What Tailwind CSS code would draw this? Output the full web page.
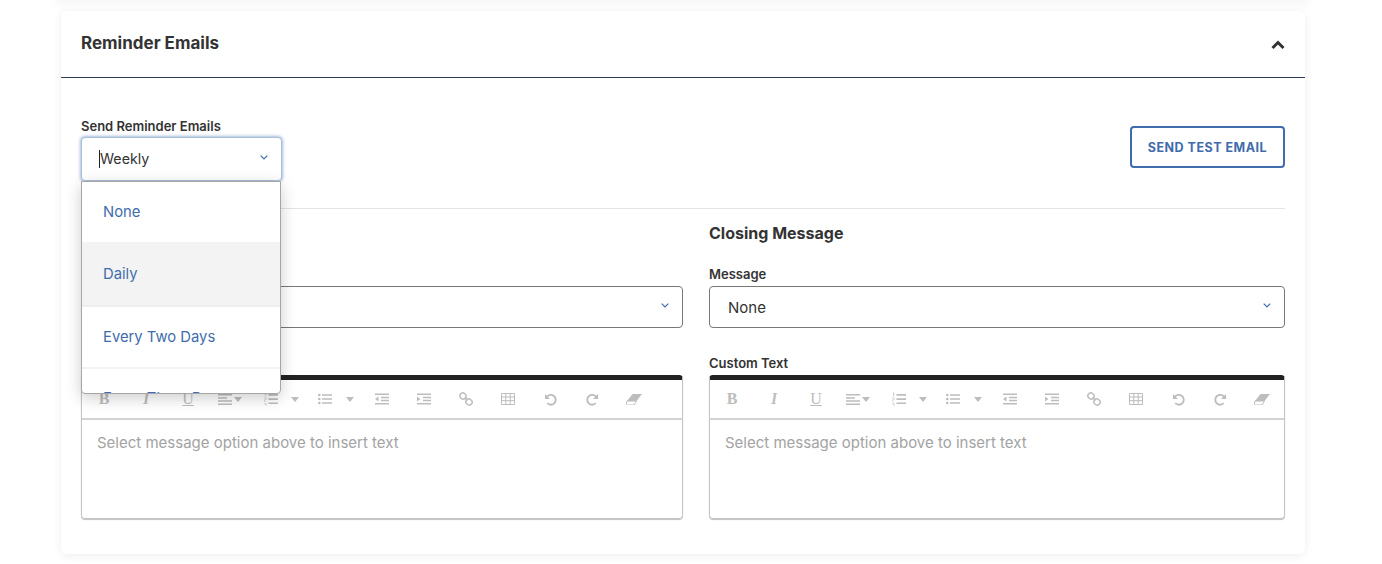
<!DOCTYPE html>
<html lang="en">
<head>
    <meta charset="UTF-8">
    <meta name="viewport" content="width=device-width, initial-scale=1.0">
    <title>Reminder Emails</title>
    <script src="https://cdn.jsdelivr.net/npm/@tailwindcss/browser@4"></script>
</head>
<body class="bg-white h-[564px] overflow-hidden font-['Inter',sans-serif] text-[#333]">

    <!-- Toolbar icons -->
    <svg class="hidden" xmlns="http://www.w3.org/2000/svg">
        <symbol id="i-caret" viewBox="0 0 8 5"><path d="M0 0h8L4 5z" fill="currentColor"/></symbol>
        <symbol id="i-align" viewBox="0 0 14 12"><path d="M0 1h14v1.500H0zM0 4.200h9v1.500H0zM0 7.300h14v1.500H0zM0 10.400h14v1.500H0z" fill="currentColor"/></symbol>
        <symbol id="i-ol" viewBox="0 0 14 14"><path d="M4.500 2h9.500v1.700H4.500zM4.500 6.200h9.500v1.700H4.500zM4.500 10.400h9.500v1.700H4.500z" fill="currentColor"/><path d="M1 .5h1.200v3.500H1zM0 5.500h2.500v2.500H.8v1H2.500v.6H0V7.400h1.700v-1.200H0zM0 11h2.500v3.500H0v-.6h1.700v-.8H.6v-.5h1.100v-1H0z" fill="currentColor" opacity=".75"/></symbol>
        <symbol id="i-ul" viewBox="0 0 14 12"><circle cx="1.300" cy="2" r="1.300" fill="currentColor"/><circle cx="1.300" cy="6" r="1.300" fill="currentColor"/><circle cx="1.300" cy="10" r="1.300" fill="currentColor"/><path d="M4 1.200h10v1.600H4zM4 5.200h10v1.600H4zM4 9.200h10v1.600H4z" fill="currentColor"/></symbol>
        <symbol id="i-outdent" viewBox="0 0 14 12"><path d="M0 .5h14v1.500H0zM6 3.700h8v1.500H6zM6 6.800h8v1.500H6zM0 10h14v1.500H0zM3.500 3.500v5L0 6z" fill="currentColor"/></symbol>
        <symbol id="i-indent" viewBox="0 0 14 12"><path d="M0 .5h14v1.500H0zM6 3.700h8v1.500H6zM6 6.800h8v1.500H6zM0 10h14v1.500H0zM0 3.500v5L3.500 6z" fill="currentColor"/></symbol>
        <symbol id="i-link" viewBox="0 0 14 14"><g fill="none" stroke="currentColor" stroke-width="1.500"><ellipse cx="4" cy="4" rx="3.200" ry="2.900" transform="rotate(40 4 4)"/><ellipse cx="10" cy="10" rx="3.200" ry="2.900" transform="rotate(40 10 10)"/><path d="M5.500 5.500l3 3"/></g></symbol>
        <symbol id="i-table" viewBox="0 0 14 12"><path d="M.5.500h13v11H.5zM.5 4h13M.5 7.700h13M4.800.5v11M9.200.5v11" fill="none" stroke="currentColor"/></symbol>
        <symbol id="i-undo" viewBox="0 0 14 14"><path d="M3 4.300A5.300 5.300 0 1 1 3.500 11" fill="none" stroke="currentColor" stroke-width="2"/><path d="M1 1v5.500h5.500z" fill="currentColor"/></symbol>
        <symbol id="i-redo" viewBox="0 0 14 14"><path d="M11 4.300A5.300 5.300 0 1 0 10.500 11" fill="none" stroke="currentColor" stroke-width="2"/><path d="M13 1v5.500H7.500z" fill="currentColor"/></symbol>
        <symbol id="i-eraser" viewBox="0 0 16 11"><path d="M6.500 0H16l-5.500 7H1z" fill="currentColor"/><path d="M1 7h9.500L8 11H0v-.5z" fill="none" stroke="currentColor"/></symbol>
    </svg>

    <!-- bottom edge of the card above -->
    <div class="h-0 mr-[77px] ml-[61px] shadow-[0_0_10px_4px_rgba(0,0,0,0.05)]"></div>

    <div class="pl-[61px] pr-[77px] pt-[11px]">
        <div class="bg-white rounded-md shadow-[0_2px_10px_rgba(0,0,0,0.07)] h-[543px]">

            <div class="h-[67px] border-b border-[#2f3d5c] pl-5 pr-5 flex items-center justify-between">
                <h2 class="text-[17px] font-bold -mt-[1px]">Reminder Emails</h2>
                <svg class="w-[14px] h-[10px] text-[#333] mt-[1px]" viewBox="0 0 14 10"><path d="M1.500 8L7 2.500 12.500 8" fill="none" stroke="currentColor" stroke-width="3"/></svg>
            </div>

            <div class="px-5 pt-[40px]">
                <div class="flex justify-between items-start h-[91px] border-b border-[#e3e3e3]">
                    <div class="relative w-[201px]">
                        <label class="block text-[13px] font-semibold leading-[18px] -mt-[1px] mb-[2px]">Send Reminder Emails</label>
                        <div class="h-[44px] rounded border border-[#a9bfdf] shadow-[0_0_3px_1px_rgba(63,108,172,0.45)] bg-white flex items-center justify-between pl-[17px] pr-[13px]">
                            <span class="text-[14.250px] border-l border-[#222] leading-[18px]">Weekly</span>
                            <svg class="w-[8px] h-[5px] -mt-[3px] text-[#3f6cac]" viewBox="0 0 8 5"><path d="M.7.7L4 4 7.300.7" fill="none" stroke="currentColor" stroke-width="1.200"/></svg>
                        </div>

                        <!-- open dropdown -->
                        <div class="absolute z-10 left-0 top-[63px] w-[200px] h-[213px] overflow-hidden bg-white border border-[#a6a6a6] rounded-b shadow-[0_4px_16px_rgba(0,0,0,0.2)] text-[14.800px] text-[#3f6cac]">
                            <div class="h-[60px] pl-[21px] flex items-center">None</div>
                            <div class="h-[65px] pl-[21px] pt-[2px] flex items-center bg-[#f3f3f3] border-b-2 border-[#eeeeee]">Daily</div>
                            <div class="h-[62px] pl-[21px] flex items-center border-b-2 border-[#f3f3f3]">Every Two Days</div>
                            <div class="h-[59px] pl-[21px] flex items-center">Every Three Days</div>
                        </div>
                    </div>
                    <button class="w-[155px] h-[42px] mt-[8px] pt-[2px] border-2 border-[#3f6cac] rounded text-[12.500px] font-bold tracking-[0.5px] text-[#3f6cac]">SEND TEST EMAIL</button>
                </div>

                <div class="flex gap-[26px]">
                    <div class="w-[602px]">
                        <h3 class="text-[16px] font-bold leading-5 mt-[14px]">Opening Message</h3>
                        <label class="block text-[13px] font-semibold leading-[18px] mt-[22px] mb-[3px]">Message</label>
                        <div class="h-[42px] rounded-sm border border-[#777] flex items-center justify-between pl-[18px] pr-[13px]">
                            <span class="text-[15px] mt-[2px]">None</span>
                            <svg class="w-[8px] h-[5px] -mt-[3px] text-[#3f6cac]" viewBox="0 0 8 5"><path d="M.7.7L4 4 7.300.7" fill="none" stroke="currentColor" stroke-width="1.200"/></svg>
                        </div>
                        <label class="block text-[13px] font-semibold leading-[18px] mt-[26px] mb-[3px]">Custom Text</label>
                        <div class="h-[144px] rounded-sm border-x border-b border-[#c4c4c4] border-t-[5px] border-t-[#222] shadow-[0_1px_1px_rgba(0,0,0,0.25)]">
                            <div class="h-[40px] border-b-2 border-[#d2d2d2] pl-[1px] flex items-center text-[#bdbdbd]">
                                <span class="w-[42px] text-center font-['Liberation_Serif',serif] font-bold text-[16px]">B</span>
                                <span class="w-[42px] text-center font-['Liberation_Serif',serif] italic font-bold text-[16px]">I</span>
                                <span class="w-[42px] text-center font-['Liberation_Serif',serif] underline text-[16px]">U</span>
                                <span class="w-[42px] flex items-center justify-center gap-[2px]"><svg class="w-[14px] h-[12px]"><use href="#i-align"/></svg><svg class="w-[8px] h-[5px]"><use href="#i-caret"/></svg></span>
                                <span class="w-[60px] flex items-center justify-center gap-[13px]"><svg class="w-[14px] h-[14px]"><use href="#i-ol"/></svg><svg class="w-[8px] h-[5px]"><use href="#i-caret"/></svg></span>
                                <span class="w-[50px] flex items-center justify-center gap-[14px]"><svg class="w-[14px] h-[12px]"><use href="#i-ul"/></svg><svg class="w-[8px] h-[5px]"><use href="#i-caret"/></svg></span>
                                <span class="w-[42px] flex justify-center"><svg class="w-[14px] h-[12px]"><use href="#i-outdent"/></svg></span>
                                <span class="w-[42px] flex justify-center"><svg class="w-[14px] h-[12px]"><use href="#i-indent"/></svg></span>
                                <span class="w-[42px] flex justify-center"><svg class="w-[14px] h-[14px]"><use href="#i-link"/></svg></span>
                                <span class="w-[42px] flex justify-center"><svg class="w-[14px] h-[12px]"><use href="#i-table"/></svg></span>
                                <span class="w-[42px] flex justify-center"><svg class="w-[13px] h-[13px]"><use href="#i-undo"/></svg></span>
                                <span class="w-[42px] flex justify-center"><svg class="w-[13px] h-[13px]"><use href="#i-redo"/></svg></span>
                                <span class="w-[42px] flex justify-center"><svg class="w-[16px] h-[11px]"><use href="#i-eraser"/></svg></span>
                            </div>
                            <p class="pl-[15px] pt-[13px] text-[15px] leading-[20px] text-[#a3a3a3]">Select message option above to insert text</p>
                        </div>
                    </div>

                    <div class="w-[576px]">
                        <h3 class="text-[16px] font-bold leading-5 mt-[14px]">Closing Message</h3>
                        <label class="block text-[13px] font-semibold leading-[18px] mt-[22px] mb-[3px]">Message</label>
                        <div class="h-[42px] rounded-sm border border-[#777] flex items-center justify-between pl-[18px] pr-[13px]">
                            <span class="text-[15px] mt-[2px]">None</span>
                            <svg class="w-[8px] h-[5px] -mt-[3px] text-[#3f6cac]" viewBox="0 0 8 5"><path d="M.7.7L4 4 7.300.7" fill="none" stroke="currentColor" stroke-width="1.200"/></svg>
                        </div>
                        <label class="block text-[13px] font-semibold leading-[18px] mt-[26px] mb-[3px]">Custom Text</label>
                        <div class="h-[144px] rounded-sm border-x border-b border-[#c4c4c4] border-t-[5px] border-t-[#222] shadow-[0_1px_1px_rgba(0,0,0,0.25)]">
                            <div class="h-[40px] border-b-2 border-[#d2d2d2] pl-[1px] flex items-center text-[#bdbdbd]">
                                <span class="w-[42px] text-center font-['Liberation_Serif',serif] font-bold text-[16px]">B</span>
                                <span class="w-[42px] text-center font-['Liberation_Serif',serif] italic font-bold text-[16px]">I</span>
                                <span class="w-[42px] text-center font-['Liberation_Serif',serif] underline text-[16px]">U</span>
                                <span class="w-[42px] flex items-center justify-center gap-[2px]"><svg class="w-[14px] h-[12px]"><use href="#i-align"/></svg><svg class="w-[8px] h-[5px]"><use href="#i-caret"/></svg></span>
                                <span class="w-[60px] flex items-center justify-center gap-[13px]"><svg class="w-[14px] h-[14px]"><use href="#i-ol"/></svg><svg class="w-[8px] h-[5px]"><use href="#i-caret"/></svg></span>
                                <span class="w-[50px] flex items-center justify-center gap-[14px]"><svg class="w-[14px] h-[12px]"><use href="#i-ul"/></svg><svg class="w-[8px] h-[5px]"><use href="#i-caret"/></svg></span>
                                <span class="w-[42px] flex justify-center"><svg class="w-[14px] h-[12px]"><use href="#i-outdent"/></svg></span>
                                <span class="w-[42px] flex justify-center"><svg class="w-[14px] h-[12px]"><use href="#i-indent"/></svg></span>
                                <span class="w-[42px] flex justify-center"><svg class="w-[14px] h-[14px]"><use href="#i-link"/></svg></span>
                                <span class="w-[42px] flex justify-center"><svg class="w-[14px] h-[12px]"><use href="#i-table"/></svg></span>
                                <span class="w-[42px] flex justify-center"><svg class="w-[13px] h-[13px]"><use href="#i-undo"/></svg></span>
                                <span class="w-[42px] flex justify-center"><svg class="w-[13px] h-[13px]"><use href="#i-redo"/></svg></span>
                                <span class="w-[42px] flex justify-center"><svg class="w-[16px] h-[11px]"><use href="#i-eraser"/></svg></span>
                            </div>
                            <p class="pl-[15px] pt-[13px] text-[15px] leading-[20px] text-[#a3a3a3]">Select message option above to insert text</p>
                        </div>
                    </div>
                </div>
            </div>
        </div>
    </div>

</body>
</html>
